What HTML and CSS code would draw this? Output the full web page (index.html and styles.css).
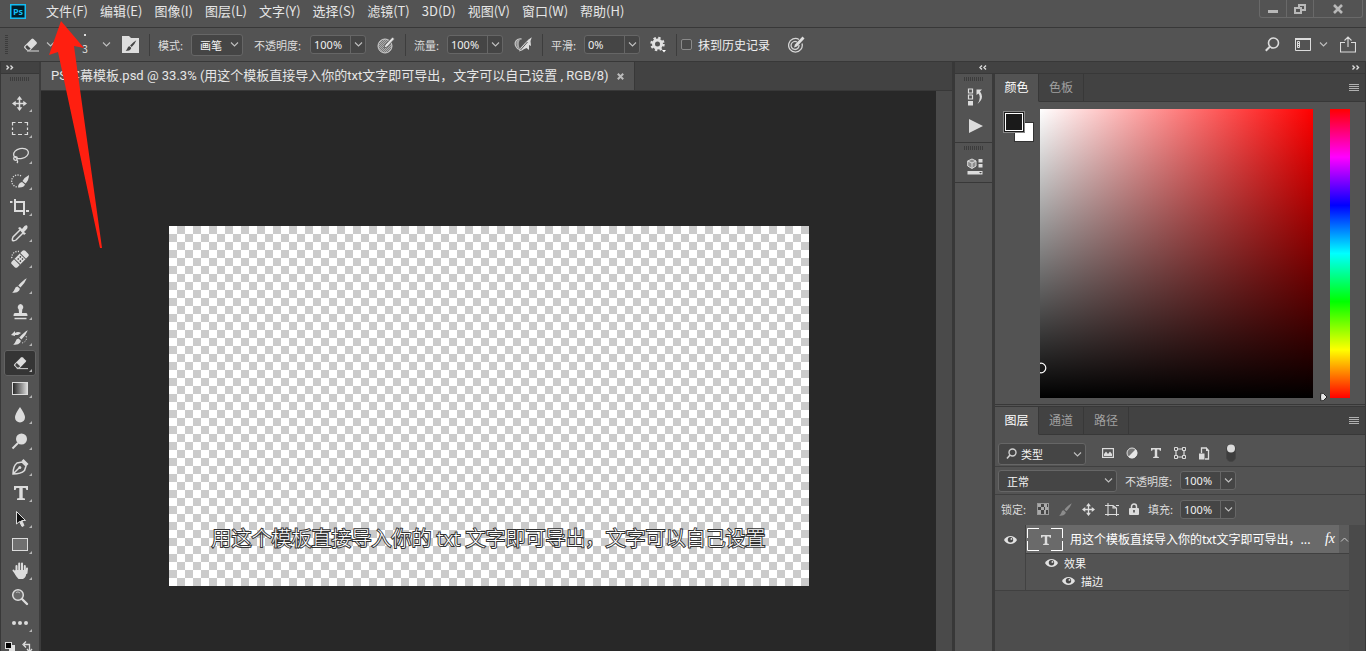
FILE: index.html
```html
<!DOCTYPE html>
<html lang="zh-CN">
<head>
<meta charset="utf-8">
<title>PS字幕模板.psd</title>
<link rel="stylesheet" href="styles.css">
</head>
<body>
<svg class="defs" aria-hidden="true">
  <defs>
    <symbol id="chev" viewBox="0 0 9 7"><path d="M1 1.500 4.500 5 8 1.500" fill="none" stroke="currentColor" stroke-width="1.100"/></symbol>
    <symbol id="tri" viewBox="0 0 4 4"><path d="M4 0V4H0Z" fill="#b5b5b5"/></symbol>
    <symbol id="eye" viewBox="0 0 14 10"><path d="M0 5C3-.8 11-.8 14 5 11 10.800 3 10.800 0 5Z" fill="#e2e2e2"/><circle cx="7" cy="4.800" r="2.900" fill="#484848"/><circle cx="8" cy="3.800" r="1" fill="#e2e2e2"/></symbol>
    <symbol id="menu" viewBox="0 0 10 8"><path d="M0 .5H10M0 2.500H10M0 4.500H10M0 6.500H10" stroke="#b0b0b0"/></symbol>
    <symbol id="eraser" viewBox="0 0 16 14"><path d="M1.500 8 8.500 1Q9.500 0 10.500 1L13.500 4Q14.500 5 13.500 6L7 12.500H4L1.300 10Q.5 9 1.500 8Z" fill="#dcdcdc"/><path d="M2.600 8.400 4 7 7.600 10.500 6.300 11.800H4.600L2.600 9.800Z" fill="#444"/><path d="M4 13H16" stroke="#dcdcdc"/></symbol>
    <symbol id="cross" viewBox="0 0 16 16"><path d="M8 2V14M2 8H14" stroke="#dcdcdc" stroke-width="1.600"/><path d="M8 0 11 4H5ZM8 16 5 12H11ZM0 8 4 5V11ZM16 8 12 11V5Z" fill="#dcdcdc"/></symbol>
    <symbol id="tee" viewBox="0 0 14 14"><path d="M0 0H14V4H12.400L11.600 2H8.700V12L11 12.500V14H3V12.500L5.300 12V2H2.400L1.600 4H0Z" fill="#dcdcdc"/></symbol>
    <symbol id="brush" viewBox="0 0 16 16"><path d="M15.800.2Q12 2 6.700 8L9 10.200Q14 5 15.800.2ZM5.800 9Q3.500 9 2.800 12 2.200 14 .2 15.600 5.500 16.300 7.500 13.500 8.700 12 8 11Z" fill="currentColor"/></symbol>
    <linearGradient id="grad"><stop offset="0" stop-color="#222"/><stop offset="1" stop-color="#ddd"/></linearGradient>
    <pattern id="mesh" width="2" height="2" patternUnits="userSpaceOnUse"><rect width="2" height="2" fill="#777"/><path d="M0 0h1v1H0ZM1 1h1v1H1Z" fill="#aaa"/></pattern>
  </defs>
</svg>

<div class="app">
  <header class="menubar">
    <svg class="logo" viewBox="0 0 16 15"><rect x=".75" y=".75" width="14.500" height="13.500" fill="#001e2b" stroke="#14bdf4" stroke-width="1.500"/><text x="8" y="11" text-anchor="middle">Ps</text></svg>
    <nav class="menus">
      <button>文件(F)</button><button>编辑(E)</button><button>图像(I)</button><button>图层(L)</button><button>文字(Y)</button><button>选择(S)</button><button>滤镜(T)</button><button>3D(D)</button><button>视图(V)</button><button>窗口(W)</button><button>帮助(H)</button>
    </nav>
    <div class="winbtns">
      <button aria-label="最小化"><svg width="12" height="12" viewBox="0 0 12 12"><path d="M1 8.500H11" stroke="#b8b8b8" stroke-width="3"/></svg></button>
      <button aria-label="还原"><svg width="12" height="10" viewBox="0 0 12 10"><path d="M5 3V1H11V6H8M1 4H7V9H1Z" fill="none" stroke="#b8b8b8" stroke-width="2"/></svg></button>
      <button class="wide" aria-label="关闭"><svg width="12" height="10" viewBox="0 0 12 10"><path d="M2 1 10 9M10 1 2 9" stroke="#b8b8b8" stroke-width="2.600"/></svg></button>
    </div>
  </header>

  <div class="options">
    <div class="preset">
      <svg class="vgrip" width="3" height="20" viewBox="0 0 3 20"><path d="M1.500 0V20" stroke="#3c3c3c" stroke-width="3" stroke-dasharray="1 1"/></svg>
      <svg width="16" height="14"><use href="#eraser"/></svg>
      <svg class="chev first" width="9" height="7"><use href="#chev"/></svg>
      <div class="brushsize"><i></i><span>3</span></div>
      <svg class="chev" width="9" height="7"><use href="#chev"/></svg>
      <svg class="brushpanel" width="17" height="17" viewBox="0 0 17 17"><path d="M0 0H7L9 2H17V17H0Z" fill="#dedede"/><svg x="3" y="4" width="12" height="11" color="#444"><use href="#brush"/></svg></svg>
    </div>
    <div class="group">
      <label class="lab short" for="mode">模式:</label>
      <span class="pick mode"><select id="mode"><option>画笔</option></select><svg width="9" height="7"><use href="#chev"/></svg></span>
      <label class="lab long spaced" for="opacity">不透明度:</label>
      <span class="num"><input id="opacity" value="100%"><button aria-label="不透明度选项"><svg width="9" height="7"><use href="#chev"/></svg></button></span>
      <svg class="spaced" width="18" height="18" viewBox="0 0 18 18"><circle cx="8" cy="10" r="7" fill="url(#mesh)" stroke="#cfcfcf"/><path d="M7 12 8 9 15.500 1 17.500 3 10 11Z" fill="#e2e2e2" stroke="#535353" stroke-width=".8"/></svg>
    </div>
    <div class="group">
      <label class="lab short" for="flow">流量:</label>
      <span class="num"><input id="flow" value="100%"><button aria-label="流量选项"><svg width="9" height="7"><use href="#chev"/></svg></button></span>
      <svg class="spaced" width="18" height="16" viewBox="0 0 18 16"><path d="M7.500 2C2 1 0 6 2 9.500 3.500 12.500 7 13.500 9 12.500" fill="none" stroke="#c4c4c4" stroke-width="1.300"/><path d="M6 2.500Q1 3 2.500 8.500 4 12 6 12 3.500 7 6 2.500Z" fill="#a8a8a8"/><path d="M17.800.3 16.500 4 17 9 15 8V13L12.500 11 5 14.500 6.500 11 11 6 14.500 2.500Z" fill="#dcdcdc"/><path d="M6.500 13 13.500 5" stroke="#555"/></svg>
    </div>
    <div class="group">
      <label class="lab short" for="smooth">平滑:</label>
      <span class="num"><input id="smooth" value="0%"><button aria-label="平滑选项"><svg width="9" height="7"><use href="#chev"/></svg></button></span>
      <svg class="gear" width="16" height="17" viewBox="0 0 16 17"><circle cx="7.500" cy="8" r="4" fill="none" stroke="#e0e0e0" stroke-width="3"/><circle cx="7.500" cy="8" r="6" fill="none" stroke="#e0e0e0" stroke-width="2.400" stroke-dasharray="2.356 2.356"/><path d="M12 14H16L14 16.500Z" fill="#fff"/></svg>
    </div>
    <div class="group last">
      <input class="tick" type="checkbox" id="history"><label class="histlab" for="history">抹到历史记录</label>
      <svg class="pressure" width="17" height="17" viewBox="0 0 17 17"><g fill="none" stroke="#d6d6d6"><path d="M11 3.500A6.800 6.800 0 1 0 14 7.500" stroke-width="1.300"/><path d="M9 6A4 4 0 1 0 11 9" stroke-width="1.300"/></g><path d="M6 11.500 7 8.500 14.500.5 16.500 2.500 9 10.500Z" fill="#dedede"/></svg>
    </div>
    <div class="right">
      <button aria-label="搜索"><svg width="15" height="15" viewBox="0 0 15 15"><circle cx="8.500" cy="6" r="5" fill="none" stroke="#dcdcdc" stroke-width="1.600"/><path d="M5 9.500.8 13.800" stroke="#dcdcdc" stroke-width="2"/></svg></button>
      <button class="screen" aria-label="工作区"><svg width="16" height="13" viewBox="0 0 16 13"><path d="M.5 1H15.500V12.500H.5Z" fill="none" stroke="#dcdcdc"/><path d="M0 1H16" stroke="#dcdcdc" stroke-width="2"/><path d="M2.500 3.500H4.500V9.500H2.500ZM2 5.500H5M2 7.500H5" fill="none" stroke="#dcdcdc"/></svg><svg class="chev" width="9" height="7"><use href="#chev"/></svg></button>
      <button aria-label="共享"><svg width="16" height="17" viewBox="0 0 16 17"><path d="M5 6.500H.5V16H15.500V6.500H11M8 1V11M4.500 4.500 8 1 11.500 4.500" fill="none" stroke="#dcdcdc" stroke-width="1.100"/></svg></button>
    </div>
  </div>

  <main class="work">
    <aside class="tools">
      <div class="strip"><svg width="8" height="5" viewBox="0 0 8 5"><path d="M.5.5 2.500 2.500.5 4.500M4.500.5 6.500 2.500 4.500 4.500" fill="none" stroke="#dcdcdc" stroke-width="1.400"/></svg></div>
      <div class="grip"></div>
      <button aria-label="移动"><svg viewBox="0 0 32 26"><use href="#cross" x="8" y="6" width="15" height="15"/><use href="#tri" x="25" y="19" width="3" height="3"/></svg></button>
      <button aria-label="矩形选框"><svg viewBox="0 0 32 26"><path d="M8.500 9.500V6.500H11.500M14 6.500H18M20.500 6.500H23.500V9.500M23.500 11.500V14M23.500 16V18.500H20.500M18 18.500H14M11.500 18.500H8.500V16M8.500 14V11.500" fill="none" stroke="#dcdcdc" stroke-width="1.200"/><use href="#tri" x="25" y="19" width="3" height="3"/></svg></button>
      <button aria-label="套索"><svg viewBox="0 0 32 26"><g fill="none" stroke="#dcdcdc" stroke-width="1.300"><ellipse cx="17" cy="11.500" rx="7.500" ry="5" transform="rotate(-12 17 11.500)"/><circle cx="11.500" cy="16.500" r="1.800"/><path d="M12.500 18Q14.500 19 13 21"/></g><use href="#tri" x="25" y="19" width="3" height="3"/></svg></button>
      <button aria-label="快速选择"><svg viewBox="0 0 32 26"><path d="M17 8A6 6 0 1 0 14 19" fill="none" stroke="#dcdcdc" stroke-width="1.300" stroke-dasharray="1.200 1.300"/><path d="M25 7Q21 9 18.500 13L21.500 15.500Q25 12 25 7ZM18 14Q14 15 14 19.500 20 20 21 16.500Z" fill="#dcdcdc"/><use href="#tri" x="25" y="19" width="3" height="3"/></svg></button>
      <button aria-label="裁剪"><svg viewBox="0 0 32 26"><path d="M6 8H8.500M10 8H20V21M11 5V17H21M22 17H25" fill="none" stroke="#dcdcdc" stroke-width="2"/><use href="#tri" x="25" y="19" width="3" height="3"/></svg></button>
      <button aria-label="吸管"><svg viewBox="0 0 32 26"><path d="M16 10 9 17Q8 19 8.500 20.500 10.500 21 12 20L19 13" fill="none" stroke="#dcdcdc" stroke-width="1.500"/><path d="M14 8 16 7 18 9 20.500 6Q23 4.500 23.500 6.500 24 8 22 10L20 12 22 13.500 20 15Z" fill="#dcdcdc"/><use href="#tri" x="25" y="19" width="3" height="3"/></svg></button>
      <button aria-label="修复画笔"><svg viewBox="0 0 32 26"><path d="M15 5.500A6 6 0 0 0 8 13" fill="none" stroke="#dcdcdc" stroke-width="1.300" stroke-dasharray="1.200 1.300"/><g transform="rotate(-45 16 13)"><rect x="6.500" y="9" width="19" height="8" rx="2" fill="#dcdcdc"/><path d="M12 9V17M20 9V17" stroke="#535353"/><path d="M14 11h1.500v1.500H14ZM17 11h1.500v1.500H17ZM14 14h1.500v1.500H14ZM17 14h1.500v1.500H17Z" fill="#444"/></g><use href="#tri" x="25" y="19" width="3" height="3"/></svg></button>
      <button aria-label="画笔"><svg viewBox="0 0 32 26" color="#dcdcdc"><use href="#brush" x="8" y="6" width="15" height="15"/><use href="#tri" x="25" y="19" width="3" height="3"/></svg></button>
      <button aria-label="仿制图章"><svg viewBox="0 0 32 26"><path d="M16.500 6A3.200 3.200 0 0 1 18.300 11.500L18 15H22Q23.500 15 23.500 18H9.500Q9.500 15 11 15H15L14.700 11.500A3.200 3.200 0 0 1 16.500 6Z" fill="#dcdcdc"/><path d="M10.500 20.500H22.500" stroke="#dcdcdc" stroke-width="1.500"/><use href="#tri" x="25" y="19" width="3" height="3"/></svg></button>
      <button aria-label="历史记录画笔"><svg viewBox="0 0 32 26" color="#dcdcdc"><use href="#brush" x="9" y="6" width="15" height="15"/><path d="M7 11 11 7V9Q14 7 17 9L14 11H11V12Z" fill="#dcdcdc"/><path d="M22 12Q24 17 18 19" fill="none" stroke="#dcdcdc" stroke-dasharray="1.200 1.500"/><use href="#tri" x="25" y="19" width="3" height="3"/></svg></button>
      <button class="on" aria-label="橡皮擦"><svg viewBox="0 0 32 26"><use href="#eraser" x="9" y="6" width="15" height="14"/><use href="#tri" x="25" y="19" width="3" height="3"/></svg></button>
      <button aria-label="渐变"><svg viewBox="0 0 32 26"><rect x="8.500" y="6.500" width="15" height="12" fill="url(#grad)" stroke="#dcdcdc"/><use href="#tri" x="25" y="19" width="3" height="3"/></svg></button>
      <button aria-label="模糊"><svg viewBox="0 0 32 26"><path d="M16 5Q21 12 21 15.500A5 5 0 0 1 11 15.500Q11 12 16 5Z" fill="#dcdcdc"/><use href="#tri" x="25" y="19" width="3" height="3"/></svg></button>
      <button aria-label="减淡"><svg viewBox="0 0 32 26"><circle cx="17.500" cy="11" r="5.500" fill="#dcdcdc"/><path d="M14 15 8.500 20.500" stroke="#dcdcdc" stroke-width="2"/><use href="#tri" x="25" y="19" width="3" height="3"/></svg></button>
      <button aria-label="钢笔"><svg viewBox="0 0 32 26"><path d="M9 20Q9 12 13 9L18 8 22 12 20.500 16.500Q17 20 9 20ZM9 20 15 14" fill="none" stroke="#dcdcdc" stroke-width="1.500"/><circle cx="15.800" cy="13.500" r="1.500" fill="#dcdcdc"/><path d="M17.500 7 19.500 5 24.500 10 22.500 12Z" fill="#dcdcdc"/><use href="#tri" x="25" y="19" width="3" height="3"/></svg></button>
      <button aria-label="文字"><svg viewBox="0 0 32 26"><use href="#tee" x="10" y="6" width="14" height="14"/><use href="#tri" x="25" y="19" width="3" height="3"/></svg></button>
      <button aria-label="路径选择"><svg viewBox="0 0 32 26"><path d="M12.500 5.500V18L15.500 15.500 18 20.500 20 19.500 17.800 14.500H21.500Z" fill="#111" stroke="#dcdcdc"/><path d="M15.500 15.500 18 20.500 20 19.500 17.800 14.500Z" fill="#dcdcdc"/><use href="#tri" x="25" y="19" width="3" height="3"/></svg></button>
      <button aria-label="矩形"><svg viewBox="0 0 32 26"><rect x="8.500" y="6.500" width="15" height="12" fill="#707070" stroke="#dcdcdc"/><use href="#tri" x="25" y="19" width="3" height="3"/></svg></button>
      <button aria-label="抓手"><svg viewBox="0 0 32 26"><path d="M12.500 14V8M15.200 12V5.500M18 12V5.500M20.800 13V8M9.500 12.500 13 17M22.500 15 23 10.500" fill="none" stroke="#dcdcdc" stroke-width="2" stroke-linecap="round"/><path d="M11.500 12H22.500Q23 19 19 21H14.500Q12 19 10 14Z" fill="#dcdcdc"/><use href="#tri" x="25" y="19" width="3" height="3"/></svg></button>
      <button aria-label="缩放"><svg viewBox="0 0 32 26"><circle cx="14" cy="11" r="5.300" fill="#696969" stroke="#dcdcdc" stroke-width="1.500"/><path d="M18 15 23 20" stroke="#dcdcdc" stroke-width="2.400" stroke-linecap="round"/><path d="M12 8.500Q14 7 16 9" fill="none" stroke="#bbb"/></svg></button>
      <button aria-label="更多"><svg viewBox="0 0 32 26"><g fill="#dcdcdc"><circle cx="10" cy="13" r="2"/><circle cx="16" cy="13" r="2"/><circle cx="22" cy="13" r="2"/></g><use href="#tri" x="25" y="19" width="3" height="3"/></svg></button>
      <button aria-label="前景色和背景色"><svg viewBox="0 0 32 26"><rect x="5" y="9" width="6" height="6" fill="#e0e0e0"/><rect x="1.500" y="6.500" width="6" height="6" fill="#000" stroke="#ddd"/><path d="M20 8.500H25.500V16M22 5.500 19 8.500 22 11.500M23 13 25.500 16 28 13" fill="none" stroke="#dcdcdc" stroke-width="1.300"/></svg></button>
    </aside>

    <section class="doc">
      <div class="doctabs">
        <div class="doctab"><span>PS字幕模板.psd @ 33.3% (用这个模板直接导入你的txt文字即可导出，文字可以自己设置 , RGB/8)</span><button aria-label="关闭文档"><svg width="7" height="7" viewBox="0 0 7 7"><path d="M.8.8 6.200 6.200M6.200.8.8 6.200" stroke="#bcbcbc" stroke-width="2"/></svg></button></div>
      </div>
      <div class="stage">
        <div class="pasteboard"><div class="artboard"><p>用这个模板直接导入你的 txt 文字即可导出，文字可以自己设置</p></div></div>
        <div class="scroll"></div>
      </div>
    </section>

    <aside class="dock">
      <div class="strip dockstrip">
        <svg width="8" height="5" viewBox="0 0 8 5"><path d="M3 .5 1 2.500 3 4.500M7 .5 5 2.500 7 4.500" fill="none" stroke="#dcdcdc" stroke-width="1.400"/></svg>
        <svg width="8" height="5" viewBox="0 0 8 5"><path d="M.5.5 2.500 2.500.5 4.500M4.500.5 6.500 2.500 4.500 4.500" fill="none" stroke="#dcdcdc" stroke-width="1.400"/></svg>
      </div>
      <div class="dockcols">
        <div class="icons">
          <div class="iconset">
            <div class="grip"></div>
            <button aria-label="历史记录"><svg width="16" height="18" viewBox="0 0 16 18"><path d="M1.500 1H5.500V5H1.500ZM1.500 7H5.500V11H1.500Z" fill="none" stroke="#dcdcdc" stroke-width="1.200"/><path d="M1 13H6V17.500H1Z" fill="#dcdcdc"/><path d="M9.500 7V1.500H15L13 3.500Q18 10 10.500 16 14.500 9.500 11.500 5.500Z" fill="#dcdcdc"/></svg></button>
            <button aria-label="动作"><svg width="16" height="14" viewBox="0 0 16 14"><path d="M2 0 16 7 2 14Z" fill="#dcdcdc"/></svg></button>
          </div>
          <div class="iconset">
            <div class="grip"></div>
            <button aria-label="属性"><svg width="16" height="17" viewBox="0 0 16 17"><path d="M5 1 9 3V8L5 10.500.7 8V3Z" fill="#8c8c8c" stroke="#dcdcdc"/><path d="M.7 3 5 5 9 3M5 5V10" fill="none" stroke="#dcdcdc"/><path d="M11.500 1H15.500V4.500H11.500ZM11.500 6H15.500V9.500H11.500ZM.5 13H15.500V16.500H.5Z" fill="#dcdcdc"/><path d="M12 14H15L13.500 15.500Z" fill="#444"/></svg></button>
          </div>
        </div>
        <div class="panels">
          <section class="color">
            <div class="tabs"><button class="cur">颜色</button><button>色板</button><svg class="burger" width="10" height="8"><use href="#menu"/></svg></div>
            <div class="colorbody">
              <div class="swatches"><i class="back"></i><i class="front"></i></div>
              <div class="field"><svg width="7" height="12" viewBox="0 0 7 12"><circle cx="1" cy="6" r="4.800" fill="none" stroke="#fff" stroke-width="1.200"/></svg></div>
              <div class="hue"><svg width="9" height="10" viewBox="0 0 9 10"><path d="M2 1Q4 0 8 5 4 10 2 9 1 5 2 1Z" fill="#e6e6e6" stroke="#222"/></svg></div>
            </div>
          </section>
          <section class="layers">
            <div class="tabs"><button class="cur">图层</button><button>通道</button><button>路径</button><svg class="burger" width="10" height="8"><use href="#menu"/></svg></div>
            <div class="prow filter">
              <span class="pick kind"><svg class="lens" width="11" height="12" viewBox="0 0 11 12"><circle cx="6.500" cy="4.500" r="3.500" fill="none" stroke="#d0d0d0" stroke-width="1.400"/><path d="M4 7 1 10.500" stroke="#d0d0d0" stroke-width="1.600"/></svg><select aria-label="筛选类型"><option>类型</option></select><svg width="9" height="7"><use href="#chev"/></svg></span>
              <div class="filters">
                <button aria-label="像素"><svg width="12" height="12" viewBox="0 0 12 12"><rect x=".6" y="1.600" width="10.800" height="8.800" fill="none" stroke="#dcdcdc" stroke-width="1.200"/><path d="M2 9V7L4 4.500 6 7 8 4.500 10 7V9Z" fill="#dcdcdc"/></svg></button>
                <button aria-label="调整"><svg width="12" height="12" viewBox="0 0 12 12"><circle cx="6" cy="6" r="5" fill="#777" stroke="#dcdcdc"/><path d="M9.700 2.300A5.200 5.200 0 0 1 2.300 9.700Z" fill="#e6e6e6"/></svg></button>
                <button aria-label="文字图层"><svg width="12" height="10"><use href="#tee"/></svg></button>
                <button aria-label="形状"><svg width="12" height="12" viewBox="0 0 12 12"><path d="M2 2H10V10H2Z" fill="none" stroke="#dcdcdc" stroke-width="1.200"/><path d="M.5.5H3.500V3.500H.5ZM8.500.5H11.500V3.500H8.500ZM.5 8.500H3.500V11.500H.5ZM8.500 8.500H11.500V11.500H8.500Z" fill="#535353" stroke="#dcdcdc"/></svg></button>
                <button aria-label="智能对象"><svg width="12" height="13" viewBox="0 0 12 13"><path d="M3.500 6V1H8L10.500 3.500V12H7" fill="none" stroke="#dcdcdc" stroke-width="1.300"/><path d="M8 0V4H11.500ZM1 6.500H6.500V12.500H1Z" fill="#dcdcdc"/></svg></button>
                <button class="switch" aria-label="筛选开关"><svg width="10" height="18" viewBox="0 0 10 18"><rect x=".5" y=".5" width="9" height="17" rx="4.500" fill="#3d3d3d" stroke="#454545"/><circle cx="5" cy="4.500" r="4" fill="#dcdcdc"/></svg></button>
              </div>
            </div>
            <div class="prow blend">
              <span class="pick normal"><select aria-label="混合模式"><option>正常</option></select><svg width="9" height="7"><use href="#chev"/></svg></span>
              <label class="lab long" for="lop">不透明度:</label>
              <span class="num"><input id="lop" value="100%"><button aria-label="图层不透明度选项"><svg width="9" height="7"><use href="#chev"/></svg></button></span>
            </div>
            <div class="prow locks">
              <span class="lab short">锁定:</span>
              <div class="lockset">
                <button aria-label="锁定透明像素"><svg width="12" height="12" viewBox="0 0 12 12"><rect x=".5" y=".5" width="11" height="11" fill="#444" stroke="#999"/><path d="M1 1H4V4H1ZM7 1H10V4H7ZM4 4H7V7H4ZM8 4H11V7H8ZM1 7H4V11H1ZM7 7H9V11H7Z" fill="#aaa"/></svg></button>
                <button class="dim" aria-label="锁定图像像素"><svg width="13" height="13"><use href="#brush"/></svg></button>
                <button aria-label="锁定位置"><svg width="13" height="13"><use href="#cross"/></svg></button>
                <button aria-label="防止嵌套"><svg width="14" height="13" viewBox="0 0 14 13"><path d="M3 0V13M0 2.500H8L11.500 5V13M0 11.500H14M11 2.500H14M8 2V5H11" fill="none" stroke="#dcdcdc" stroke-width="1.100"/></svg></button>
                <button aria-label="锁定全部"><svg width="10" height="12" viewBox="0 0 10 12"><path d="M2.500 6V3.500A2.500 2.500 0 0 1 7.500 3.500V6" fill="none" stroke="#dcdcdc" stroke-width="1.500"/><rect y="5" width="10" height="7" rx="1" fill="#dcdcdc"/><path d="M5 7V9.500" stroke="#444" stroke-width="1.500"/></svg></button>
              </div>
              <label class="lab short" for="fill">填充:</label>
              <span class="num"><input id="fill" value="100%"><button aria-label="填充选项"><svg width="9" height="7"><use href="#chev"/></svg></button></span>
            </div>
            <div class="listwrap">
              <div class="list">
                <div class="layer">
                  <button class="eyecol" aria-label="显示图层"><svg width="13" height="10"><use href="#eye"/></svg></button>
                  <div class="rows">
                    <div class="mainrow">
                      <div class="selected">
                        <svg class="thumb" width="36" height="23" viewBox="0 0 36 23"><path d="M.5 10V.5H12M24 .5H35.500V10M35.500 13V22.500H24M12 22.500H.5V13" fill="none" stroke="#fff"/><use href="#tee" x="13" y="7" width="12" height="10"/></svg>
                        <span class="lname">用这个模板直接导入你的txt文字即可导出，...</span>
                        <em>fx</em>
                      </div>
                      <button class="caret" aria-label="折叠效果"><svg width="9" height="7" viewBox="0 0 9 7"><path d="M1 5.500 4.500 2 8 5.500" fill="none" stroke="#c8c8c8"/></svg></button>
                    </div>
                    <div class="fx"><svg width="13" height="10"><use href="#eye"/></svg><span>效果</span></div>
                    <div class="fx sub"><svg width="13" height="10"><use href="#eye"/></svg><span>描边</span></div>
                  </div>
                </div>
              </div>
              <div class="scroll"></div>
            </div>
          </section>
        </div>
      </div>
    </aside>
  </main>
</div>
<svg class="pointer" width="60" height="230" viewBox="0 0 60 230" aria-hidden="true"><path d="M17 0 40 27 30 25 58 227 56 227 14 31 5 34Z" fill="#ff1f10"/></svg>
</body>
</html>
```
FILE: styles.css
```css
* { box-sizing: border-box; }
body {
  margin: 0;
  background: #535353;
  color: #e6e6e6;
  font: 12px/16px "Noto Sans CJK SC", "Noto Sans", sans-serif;
  overflow: hidden;
}
button, select, input { font: inherit; color: inherit; }
button { background: none; border: 0; padding: 0; display: flex; align-items: center; justify-content: center; }
svg { display: block; flex: none; }
.defs { position: absolute; width: 0; height: 0; }
.app { display: flex; flex-direction: column; height: 100vh; }

.menubar { display: flex; height: 28px; border-bottom: 1px solid #383838; padding-right: 3px; }
.logo { width: 16px; height: 15px; margin: 4px 20px 0 10px; }
.logo text { font: bold 9px "Open Sans", sans-serif; fill: #14bdf4; }
.menus { display: flex; flex: 1; gap: 12px; height: 21px; font-size: 13px; }
.winbtns { display: flex; height: 18px; border: 1px solid #696969; border-top: 0; border-radius: 0 0 3px 3px; }
.winbtns button { width: 27px; border-right: 1px solid #696969; }
.winbtns .wide { width: 48px; border: 0; }

.options { display: flex; align-items: center; height: 34px; border-bottom: 1px solid #383838; padding-right: 10px; }
.preset { display: flex; align-items: center; width: 149px; padding-left: 5px; }
.vgrip { margin-right: 15px; }
.chev { color: #c0c0c0; }
.chev.first { margin-left: 7px; }
.brushsize { display: flex; flex-direction: column; align-items: center; width: 20px; margin: 0 7px 0 20px; font-size: 10px; line-height: 13px; }
.brushsize i { width: 2px; height: 2px; background: #ddd; margin-bottom: 6px; }
.brushpanel { margin-left: 11px; }
.group { display: flex; align-items: center; gap: 5px; height: 22px; padding: 0 10px 0 8px; border-left: 1px solid #3d3d3d; }
.lab { font-size: 11px; white-space: nowrap; color: #dcdcdc; }
.short { width: 28px; }
.long { width: 51px; }
.spaced { margin-left: 6px; }
.gear { margin-left: 5px; }
.pick { display: flex; align-items: center; height: 22px; background: #454545; border: 1px solid #666; border-radius: 3px; padding-right: 3px; color: #c0c0c0; }
.pick select { appearance: none; flex: 1; min-width: 0; background: none; border: 0; padding: 0 0 0 8px; font-size: 11px; color: #f4f4f4; outline: 0; }
.mode { width: 52px; }
.num { display: flex; width: 56px; height: 19px; background: #454545; border: 1px solid #666; border-radius: 3px; }
.num input { flex: 1; min-width: 0; background: none; border: 0; padding: 0 0 0 3px; font: 11px "Noto Sans", sans-serif; color: #f0f0f0; outline: 0; }
.num button { width: 15px; border-left: 1px solid #666; color: #c0c0c0; }
.last { padding-left: 4px; gap: 6px; }
.tick { appearance: none; width: 11px; height: 11px; margin: 0; border: 1px solid #8a8a8a; border-radius: 2px; background: #4a4a4a; }
.histlab { color: #f0f0f0; }
.pressure { margin-left: 12px; }
.right { display: flex; align-items: center; gap: 15px; margin-left: auto; }
.screen { gap: 8px; }
.screen + button { margin-left: -3px; }

.work { display: flex; flex: 1; min-height: 0; }
.strip { display: flex; align-items: center; height: 12px; background: #424242; border-bottom: 1px solid #383838; }
.grip { width: 19px; height: 4px; background: repeating-linear-gradient(90deg, #3c3c3c 0 1px, #535353 1px 2px); }
.tools { width: 41px; flex: none; border-left: 1px solid #383838; border-right: 2px solid #3c3c3c; overflow: hidden; }
.tools .strip { padding-left: 5px; }
.tools .grip { margin: 3px 0 9px 9px; }
.tools button { width: 32px; height: 26px; margin-left: 3px; border-radius: 3px; }
.tools button svg { width: 32px; height: 26px; }
.tools .on { background: #353535; box-shadow: inset 0 0 0 1px #626262; }

.doc { flex: 1; min-width: 0; display: flex; flex-direction: column; border-right: 1px solid #383838; }
.doctabs { display: flex; height: 29px; background: #424242; border-bottom: 1px solid #383838; }
.doctab { display: flex; align-items: center; gap: 9px; padding: 0 10px; background: #535353; border-right: 1px solid #383838; font-family: Roboto, "Noto Sans CJK SC", sans-serif; font-size: 13px; white-space: nowrap; }
.stage { flex: 1; display: flex; min-height: 0; }
.pasteboard { flex: 1; display: flex; justify-content: center; align-items: flex-start; background: #282828; padding-top: 135px; overflow: hidden; }
.artboard { width: 640px; height: 360px; display: flex; align-items: flex-end; justify-content: center; padding-bottom: 32px; background: repeating-conic-gradient(#cbcbcb 0 25%, #fff 0 50%) 0 0 / 16px 16px; }
.artboard p { margin: 0; font-family: "Noto Sans", "Noto Sans CJK SC", sans-serif; font-size: 20px; line-height: 30px; font-weight: 300; color: #fff; white-space: nowrap; -webkit-text-stroke: 2px #333; paint-order: stroke fill; }
.scroll { width: 16px; background: #4a4a4a; }

.dock { width: 413px; flex: none; display: flex; flex-direction: column; border-left: 2px solid #383838; border-right: 1px solid #383838; }
.dockstrip { justify-content: space-between; padding: 0 5px 0 24px; }
.dockcols { flex: 1; display: flex; min-height: 0; }
.icons { width: 40px; border-right: 3px solid #3a3a3a; }
.iconset { border-bottom: 1px solid #383838; padding: 3px 0 7px 9px; }
.iconset button { width: 20px; height: 18px; margin: 7px 0 11px 1px; }
.iconset button:last-child { margin-bottom: 0; }
.panels { flex: 1; min-width: 0; display: flex; flex-direction: column; }
.tabs { display: flex; height: 28px; background: #424242; box-shadow: inset 0 -1px #383838; }
.tabs button { width: 45px; padding-bottom: 2px; color: #a0a0a0; border-right: 1px solid #383838; border-bottom: 1px solid #383838; }
.tabs .cur { width: 44px; background: #535353; color: #fff; border-bottom-color: #535353; }
.burger { margin: 10px 6px 0 auto; }
.colorbody { display: flex; padding: 7px 15px 6px 8px; border-bottom: 1px solid #383838; }
.swatches { display: grid; align-content: start; width: 37px; padding-top: 2px; }
.swatches i { grid-area: 1 / 1; }
.front { width: 22px; height: 22px; background: #1a1a1a; border: 1px solid #888; outline: 1px solid #fff; outline-offset: -3px; }
.back { width: 20px; height: 20px; margin: 11px 0 0 11px; background: #fff; border: 1px solid #333; }
.field { flex: 1; height: 289px; background: linear-gradient(to top, #000, transparent), linear-gradient(to right, #fff, #f00); }
.field svg { margin-top: 253px; }
.hue { width: 20px; height: 289px; margin-left: 17px; background: linear-gradient(#f00, #f0f, #00f, #0ff, #0f0, #ff0, #f00); position: relative; }
.hue svg { position: absolute; left: -11px; bottom: -4px; }

.layers { flex: 1; display: flex; flex-direction: column; margin-top: 1px; border-top: 1px solid #383838; }
.prow { display: flex; align-items: center; height: 28px; padding-left: 3px; border-bottom: 1px solid #404040; }
.filter { height: 32px; padding-top: 7px; }
.kind { width: 88px; }
.kind select { padding-left: 4px; }
.lens { margin-left: 7px; }
.filters { display: flex; align-items: center; gap: 12px; margin: -2px 0 0 16px; }
.switch { margin-left: 4px; }
.normal { width: 119px; margin-right: 8px; }
.blend .num { margin-left: 4px; }
.locks { height: 30px; border-bottom: 0; padding-left: 6px; padding-bottom: 2px; }
.lockset { display: flex; align-items: center; gap: 10px; width: 100px; margin: 0 11px 0 8px; }
.dim { color: #8c8c8c; }
.locks .num { margin-left: 4px; }
.listwrap { flex: 1; display: flex; }
.list { flex: 1; min-width: 0; background: #4d4d4d; }
.layer { display: flex; background: #535353; border-bottom: 1px solid #404040; }
.eyecol { width: 30px; height: 29px; }
.rows { flex: 1; min-width: 0; border-left: 1px solid #424242; }
.mainrow { display: flex; height: 29px; border-bottom: 1px solid #404040; }
.selected { flex: 1; min-width: 0; display: flex; align-items: center; background: #6a6a6a; padding: 0 4px 0 1px; color: #fff; }
.lname { flex: 1; margin-left: 7px; white-space: nowrap; }
.selected em { font: italic 14px "Liberation Serif", serif; }
.caret { width: 10px; background: #5c5c5c; }
.fx { display: flex; align-items: center; height: 17px; gap: 6px; padding-left: 19px; color: #f4f4f4; font-size: 11px; }
.sub { padding-left: 36px; height: 19px; }

.pointer { position: absolute; left: 44px; top: 21px; pointer-events: none; }
```
